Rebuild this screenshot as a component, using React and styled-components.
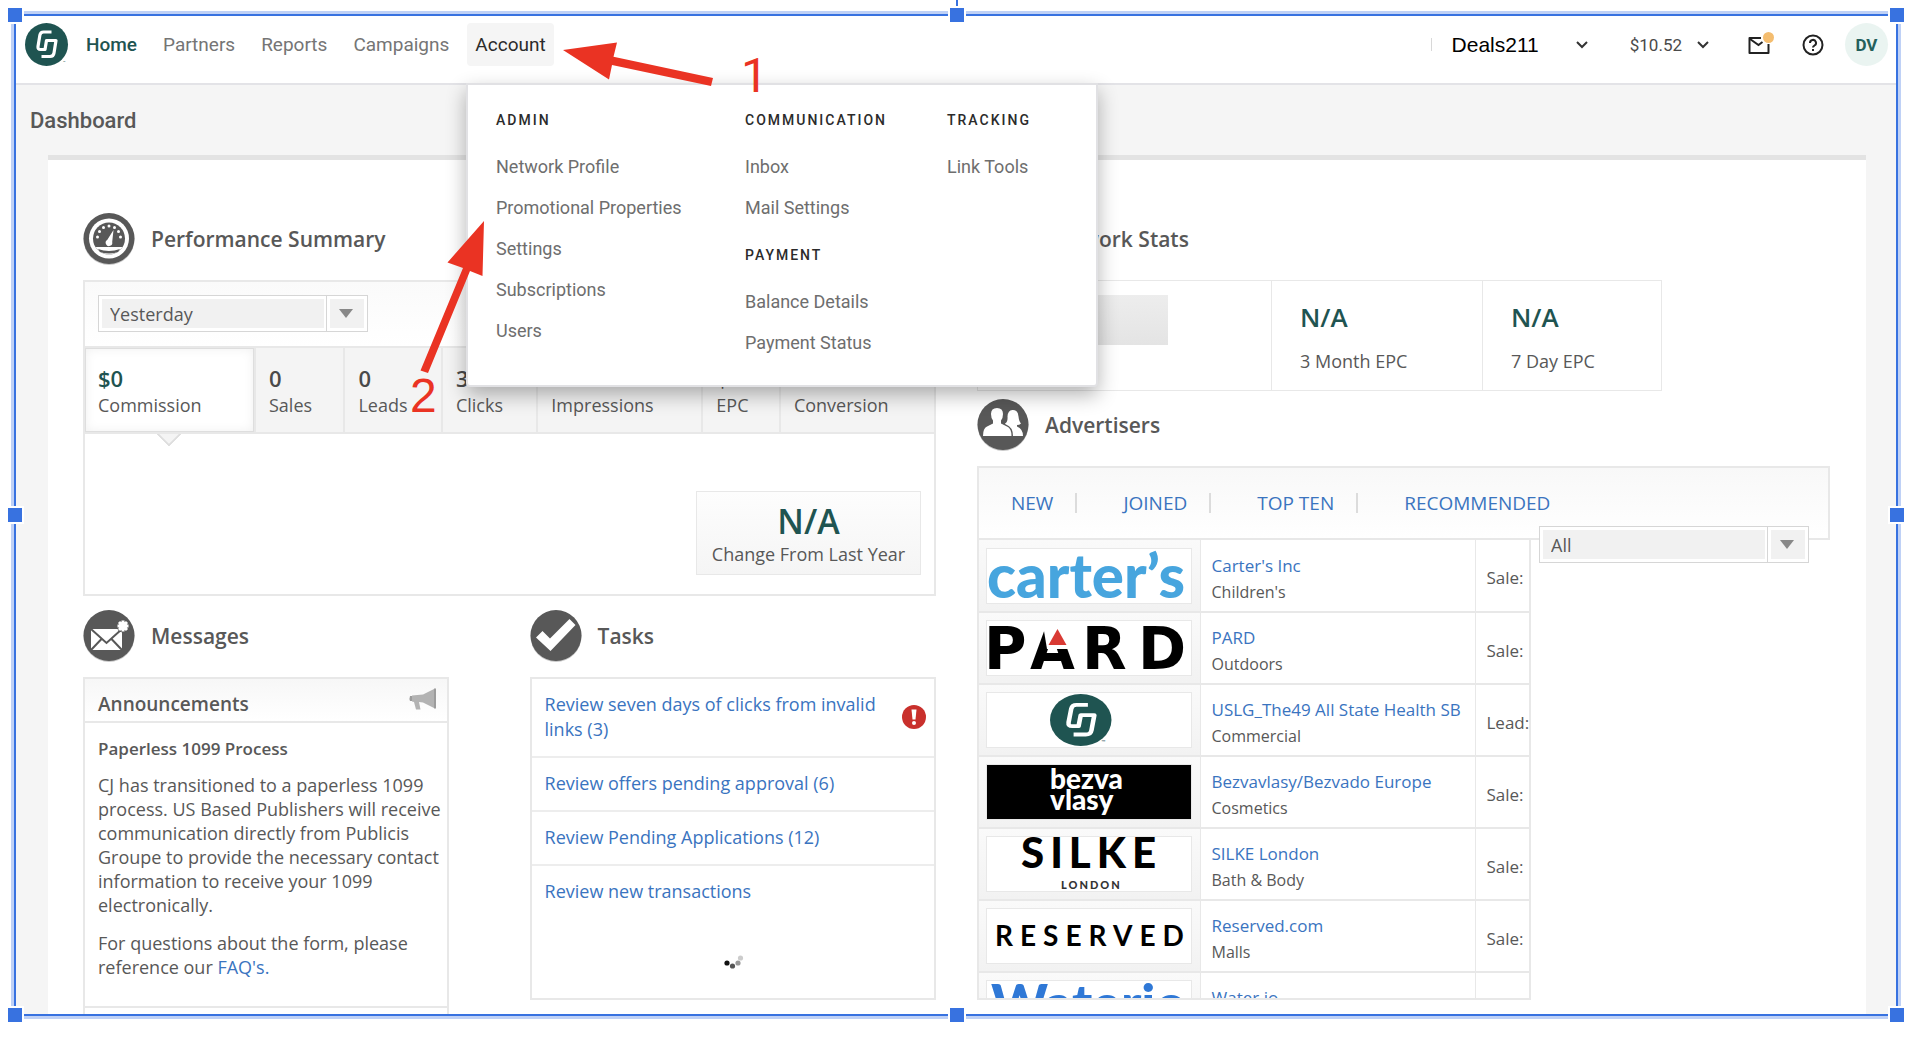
import React from "react";
import styled, { createGlobalStyle, css } from "styled-components";

const C = {
  text: "#585858",
  navText: "#757575",
  dark: "#2b2b2b",
  green: "#1f5451",
  link: "#3a74bf",
  line: "#e8e8e8",
  blue: "#3872e0",
  blueSoft: "#bfd1f6",
  red: "#ea3323",
};

const sans = '"Open Sans", "Noto Sans", sans-serif';
const ui = 'Roboto, "Liberation Sans", sans-serif';

const Global = createGlobalStyle`
  *, *::before, *::after { box-sizing: border-box; }
  html, body { margin: 0; height: 100%; background: #fff; }
  body { overflow: hidden; }
  h1, h2, h3, p, ul { margin: 0; padding: 0; }
  ul { list-style: none; }
  a { text-decoration: none; color: inherit; }
  svg { display: block; }
`;

/* ---------- selection frame ---------- */

const Canvas = styled.div`
  position: relative;
  height: 100vh;
  min-height: 600px;
  padding: 14px 12px 24px 14px;
  overflow: hidden;
`;

const Frame = styled.div`
  display: flex;
  flex-direction: column;
  height: 100%;
  border: 2px solid ${C.blue};
  box-shadow: 0 0 0 3px ${C.blueSoft};
  background: #f5f5f5;
  overflow: hidden;
`;

const Handle = styled.span`
  position: absolute;
  width: 18px;
  height: 18px;
  border: 2px solid #fff;
  background: ${C.blue};
  ${(p) => (p.$v === "top" ? "top: 6px;" : p.$v === "bottom" ? "bottom: 16px;" : "top: calc(50% - 14px);")}
  ${(p) => (p.$h === "left" ? "left: 6px;" : p.$h === "right" ? "right: 4px;" : "left: calc(50% - 7px);")}
`;

const Stem = styled.span`
  position: absolute;
  top: 0;
  left: calc(50% + 1px);
  width: 2px;
  height: 6px;
  background: ${C.blue};
`;

const Marks = styled.svg`
  position: absolute;
  z-index: 3;
  top: 0;
  left: 0;
  width: 760px;
  height: 420px;
  pointer-events: none;
`;

const Mark = styled.span`
  position: absolute;
  z-index: 3;
  left: ${(p) => p.$x}px;
  top: ${(p) => p.$y}px;
  font: 48px/48px ${(p) => p.$font};
  color: ${C.red};
`;

/* ---------- header ---------- */

const Header = styled.header`
  position: relative;
  display: flex;
  align-items: flex-start;
  justify-content: space-between;
  flex: none;
  height: 69px;
  padding: 7px 8px 0 9px;
  background: #fff;
  border-bottom: 2px solid #e3e3e7;
  font-family: ${ui};
`;

const Cluster = styled.div`
  display: flex;
  align-items: center;
  height: 43px;
`;

const Nav = styled.nav`
  display: flex;
  align-items: center;
  gap: 10px;
  margin-left: 9px;
`;

const NavLink = styled.a`
  display: flex;
  align-items: center;
  height: 43px;
  padding: 0 8px;
  border-radius: 4px;
  font-size: 19px;
  color: ${C.navText};
  ${(p) => p.$current && css`font-weight: 500; color: ${C.green};`}
  ${(p) => p.$open && css`background: #f5f5f5; color: ${C.dark};`}
`;

const Rule = styled.span`
  width: 1px;
  height: 13px;
  margin-right: 20px;
  background: #d8d8d8;
`;

const TopButton = styled.button`
  display: flex;
  align-items: center;
  padding: 0;
  border: 0;
  background: none;
  color: ${C.dark};
  font-family: ${ui};
  cursor: pointer;
`;

const CompanyButton = styled(TopButton)`
  gap: 37px;
  color: #000;
  font: 21px/26px "Liberation Sans", Arial, sans-serif;
`;

const BalanceButton = styled(TopButton)`
  gap: 15px;
  margin-left: 42px;
  font-size: 17px;
  color: #4a4a4a;
`;

const IconButton = styled(TopButton)`
  margin-left: ${(p) => p.$gap}px;
`;

const Avatar = styled(TopButton)`
  justify-content: center;
  width: 43px;
  height: 43px;
  margin-left: 21px;
  border-radius: 50%;
  background: #eaf4f1;
  color: #24605c;
  font-size: 17px;
  font-weight: 700;
`;

const Menu = styled.div`
  position: absolute;
  top: 67px;
  left: 450px;
  z-index: 2;
  display: grid;
  grid-template-columns: 249px 202px 148px;
  width: 632px;
  height: 304px;
  padding: 25px 0 0 28px;
  background: #fff;
  border: 2px solid #e1e1e4;
  border-radius: 0 0 4px 4px;
  box-shadow: 0 8px 20px rgba(0, 0, 0, 0.3);
`;

const MenuTitle = styled.h3`
  margin-bottom: 17px;
  font-size: 14px;
  line-height: 20px;
  font-weight: 500;
  letter-spacing: 2px;
  color: ${C.dark};
`;

const MenuLink = styled.a`
  display: block;
  height: 41px;
  padding-top: 9px;
  font-size: 18px;
  line-height: 22px;
  color: #6e6e6e;
`;

const MenuGroup = styled.div`
  margin-bottom: 16px;
`;

/* ---------- page ---------- */

const PageTitle = styled.h1`
  flex: none;
  padding: 21px 14px 0;
  height: 70px;
  font: 500 22px/30px ${ui};
  color: ${C.text};
`;

const Sheet = styled.main`
  flex: 1;
  min-height: 0;
  display: grid;
  grid-template-columns: minmax(0, 1fr) minmax(0, 1fr);
  column-gap: 41px;
  margin: 0 30px 0 32px;
  padding: 53px 36px 0 35px;
  border-top: 5px solid #e3e3e3;
  background: #fff;
  font-family: ${sans};
  color: ${C.text};
  overflow: hidden;
`;

const Column = styled.div`
  display: flex;
  flex-direction: column;
`;

const Heading = styled.div`
  display: flex;
  align-items: center;
  flex: none;
  gap: 16px;
  height: 52px;
  margin-bottom: 15px;
`;

const HeadingText = styled.h2`
  font-size: 21px;
  line-height: 30px;
  font-weight: 600;
`;

const Box = styled.section`
  flex: none;
  border: 2px solid ${C.line};
  background: #fff;
`;

const SelectWrap = styled.div`
  position: relative;
  width: 270px;
  height: 37px;
  &::after {
    content: "";
    position: absolute;
    right: 15px;
    top: 14px;
    border: 7px solid transparent;
    border-top: 9px solid #888;
    border-bottom: 0;
    pointer-events: none;
  }
`;

const Select = styled.select`
  appearance: none;
  width: 100%;
  height: 100%;
  padding: 0 50px 0 11px;
  border: 1px solid #d6d6d6;
  border-radius: 0;
  background:
    linear-gradient(#f1f1f1, #f1f1f1) 3px 3px / 222px calc(100% - 6px) no-repeat,
    linear-gradient(#d6d6d6, #d6d6d6) 227px 0 / 1px 100% no-repeat,
    linear-gradient(#f1f1f1, #f1f1f1) 231px 3px / 34px calc(100% - 6px) no-repeat,
    #fff;
  font: 18px/24px ${sans};
  color: ${C.text};
`;

const Filter = styled.div`
  padding: 13px;
  height: 64px;
  background: linear-gradient(#fafafa, #fff);
`;

const StatTabs = styled.div`
  display: grid;
  grid-template-columns: 172fr 90fr 98fr 96fr 166fr 78fr 154fr;
  height: 88px;
  border-top: 2px solid ${C.line};
  border-bottom: 2px solid ${C.line};
`;

const StatTab = styled.button`
  position: relative;
  display: flex;
  flex-direction: column;
  align-items: flex-start;
  padding: 16px 0 0 13px;
  border: 0;
  border-right: 2px solid ${C.line};
  background: #f4f4f4;
  font-family: ${sans};
  color: ${C.text};
  &:last-child { border-right: 0; }
  ${(p) => p.$active && css`
    background: #fff;
    box-shadow: inset 0 0 0 1px #dedede, inset 0 0 12px rgba(0, 0, 0, 0.07);
    &::after {
      content: "";
      position: absolute;
      left: calc(50% - 9px);
      bottom: -11px;
      width: 18px;
      height: 18px;
      border: solid #dedede;
      border-width: 0 2px 2px 0;
      background: #f4f4f4;
      clip-path: polygon(100% 0, 100% 100%, 0 100%);
      transform: rotate(45deg);
    }
  `}
`;

const StatValue = styled.strong`
  font-size: 22px;
  line-height: 28px;
  font-weight: 600;
  color: ${(p) => (p.$active ? C.green : "#4a4a4a")};
`;

const StatLabel = styled.span`
  font-size: 18px;
  line-height: 26px;
`;

const ChartArea = styled.div`
  display: flex;
  justify-content: flex-end;
  align-items: flex-end;
  height: 160px;
  padding: 0 13px 19px;
`;

const Change = styled.div`
  display: flex;
  flex-direction: column;
  align-items: center;
  width: 225px;
  height: 84px;
  padding-top: 8px;
  border: 1px solid ${C.line};
  background: linear-gradient(#fdfdfd, #f5f5f5);
  font-size: 18px;
  line-height: 24px;
`;

const ChangeValue = styled.strong`
  font-size: 34px;
  line-height: 42px;
  font-weight: 600;
  color: ${C.green};
`;

const LowerRow = styled.div`
  display: grid;
  grid-template-columns: 366fr 407fr;
  column-gap: 81px;
  padding-top: 14px;
`;

const BoxHead = styled.div`
  display: flex;
  justify-content: space-between;
  height: 44px;
  padding: 8px 10px 0 13px;
  border-bottom: 2px solid ${C.line};
  background: linear-gradient(#f7f7f7, #fff);
`;

const BoxTitle = styled.h3`
  padding-top: 3px;
  font-size: 19px;
  line-height: 28px;
  font-weight: 600;
`;

const Notice = styled.div`
  height: 285px;
  padding: 14px 0 0 13px;
  border-bottom: 2px solid ${C.line};
  font-size: 18px;
  line-height: 24px;
`;

const NoticeTitle = styled.h3`
  margin-bottom: 12px;
  font-size: 17px;
  font-weight: 600;
`;

const Para = styled.p`
  margin-bottom: 14px;
`;

const Link = styled.a`
  color: ${C.link};
`;

const Task = styled.li`
  display: flex;
  align-items: center;
  justify-content: space-between;
  padding: 13px 8px 14px 13px;
  border-bottom: ${(p) => (p.$last ? 0 : 2)}px solid #ededed;
  color: ${C.link};
`;

const TaskText = styled.a`
  max-width: 340px;
  font-size: 18px;
  line-height: 25px;
`;

const Loading = styled.div`
  display: flex;
  justify-content: center;
  height: 80px;
  padding-top: 35px;
`;

const Stats = styled(Box)`
  display: grid;
  grid-template-columns: 293px 211px 179px;
  width: 685px;
  height: 111px;
  margin-bottom: 8px;
  border-width: 1px;
`;

const Stat = styled.div`
  padding: 20px 0 0 28px;
  border-left: 1px solid ${C.line};
  font-size: 18px;
  line-height: 24px;
`;

const StatBig = styled.strong`
  display: block;
  margin-bottom: 16px;
  font-size: 26px;
  line-height: 32px;
  font-weight: 600;
  color: ${C.green};
`;

const Meter = styled.div`
  width: 176px;
  height: 50px;
  margin: 14px;
  background: linear-gradient(#ededed, #e4e4e4);
`;

const AdTabs = styled.nav`
  display: flex;
  align-items: center;
  flex: none;
  height: 74px;
  padding-left: 32px;
  border: 2px solid ${C.line};
  background: linear-gradient(#f8f8f8, #fff);
`;

const AdTab = styled.a`
  display: flex;
  align-items: center;
  font-size: 19px;
  line-height: 26px;
  color: ${C.link};
  & + &::before {
    content: "";
    width: 2px;
    height: 20px;
    margin: 0 46px 0 22px;
    background: #dcdcdc;
  }
`;

const AdRow = styled.div`
  display: flex;
  align-items: flex-start;
  gap: 8px;
`;

const AdFilter = styled.div`
  margin-top: -14px;
`;

const AdScroll = styled.div`
  width: 554px;
  height: 460px;
  border: 2px solid ${C.line};
  border-top: 0;
  overflow: hidden;
`;

const AdTable = styled.table`
  width: 100%;
  table-layout: fixed;
  border-collapse: collapse;
`;

const LogoCell = styled.td`
  width: 221px;
  height: 72px;
  padding: 0 7px;
  border-right: 1px solid ${C.line};
  border-bottom: 2px solid ${C.line};
  background: linear-gradient(#fafafa, #f2f2f2);
`;

const NameCell = styled.td`
  width: 275px;
  padding: 6px 0 0 11px;
  border-right: 1px solid ${C.line};
  border-bottom: 2px solid ${C.line};
  white-space: nowrap;
  font-size: 17px;
  line-height: 26px;
`;

const Category = styled.div`
  font-size: 16px;
`;

const TermCell = styled.td`
  padding: 4px 0 0 11px;
  border-bottom: 2px solid ${C.line};
  font-size: 17px;
  overflow: hidden;
`;

const LogoArt = styled.svg`
  width: 206px;
  height: 56px;
  border: 1px solid ${C.line};
  background: ${(p) => p.$bg || "#fff"};
  overflow: hidden;
`;

/* ---------- drawings ---------- */

const CJMark = () => (
  <g fill="none" stroke="#fff" strokeWidth="3.2" strokeLinejoin="round">
    <path d="M26.500 9H18.500Q15.500 9 14.900 12L13 23.500Q12.600 26.500 15.500 26.500H20L21.500 17.500H31L29 30Q28.500 33.500 25 33.500H16.500" />
  </g>
);

const CJLogo = () => (
  <svg width="44" height="43" viewBox="0 0 44 43" role="img" aria-label="CJ">
    <ellipse cx="21.5" cy="21.500" rx="21.500" ry="21.500" fill={C.green} />
    <CJMark />
    <text x="38" y="41" fontSize="4" fontFamily="Roboto" fill={C.green}>™</text>
  </svg>
);

const Chevron = () => (
  <svg width="12" height="8" viewBox="0 0 12 8" fill="none" stroke="#333" strokeWidth="2" aria-hidden="true">
    <path d="M1 1l5 5 5-5" />
  </svg>
);

const MailIcon = () => (
  <svg width="28" height="26" viewBox="0 0 28 26" fill="none" aria-hidden="true">
    <path d="M14 6H2.500V21h19V12" stroke="#222" strokeWidth="2" strokeLinejoin="round" />
    <path d="M3 7l8.500 6 4-3" stroke="#222" strokeWidth="2" />
    <circle cx="21.500" cy="5.500" r="5.500" fill="#f4bd6f" />
  </svg>
);

const HelpIcon = () => (
  <svg width="22" height="22" viewBox="0 0 22 22" fill="none" stroke="#222" strokeWidth="2" aria-hidden="true">
    <circle cx="11" cy="11" r="9.500" />
    <path d="M8 9a3 3 0 1 1 4.500 2.500Q11 12.500 11 13.500" />
    <path d="M11 15v2" />
  </svg>
);

const Badge = ({ children }) => (
  <svg width="52" height="54" viewBox="0 0 52 54" aria-hidden="true">
    <circle cx="26" cy="27.500" r="25.500" fill="#c9c9c9" />
    <circle cx="26" cy="26.500" r="25.500" fill={C.text} />
    {children}
  </svg>
);

const GaugeArt = () => (
  <Badge>
    <circle cx="26" cy="26.500" r="20" fill="#fff" />
    <circle cx="26" cy="26.500" r="16" fill={C.text} />
    <path d="M12.500 35h27A16 16 0 0 1 12.500 35z" fill="#fff" />
    <path d="M15 37q11 4 22 0l-2 3q-9 3-18 0z" fill={C.text} />
    <path d="M30.500 18l-1.300 12a3.300 3.300 0 1 1-5-2z" fill="#fff" />
    <g fill="#fff">
      {[[14.500, 25], [16.500, 19.500], [20.500, 15.500], [26, 14], [31.500, 15.500], [35.500, 19.500], [37.500, 25]].map(([x, y]) => (
        <circle key={x} cx={x} cy={y} r="1.500" />
      ))}
    </g>
  </Badge>
);

const LetterArt = () => (
  <Badge>
    <rect x="8" y="20" width="31" height="21" fill="#fff" />
    <path d="M8 20l15.500 14L39 20M8 41l10.500-11M39 41L28.500 30" fill="none" stroke={C.text} strokeWidth="2" />
    <circle cx="40" cy="17" r="6.500" fill={C.text} />
    <path d="M40 11.500v11M34.500 17h11M36 13l8 8M44 13l-8 8" stroke="#fff" strokeWidth="3" />
    <circle cx="40" cy="17" r="4" fill="#fff" />
  </Badge>
);

const CheckArt = () => (
  <Badge>
    <path d="M6 28.500L12.500 22 20 29.500 39.500 10 45.500 16 20.500 42z" fill="#fff" />
  </Badge>
);

const PeopleArt = () => (
  <Badge>
    <path d="M6 38q0-8 4-9.500l6-3v-3q-2-2.500-2-6.500 0-6 6-6t6 6q0 4-2 6.500v3l6 3q4.500 2 4.500 9.500z" fill="#fff" />
    <path d="M36 38q0-9-7-11.500-1-.5-1-1 3-1.500 2.500-7Q31 11.500 36 12q5 0 5.500 6.500.5 5 2.500 7-1.500 1.500-4 1.500v1.500q6 2.500 6 9.500z" fill="#fff" />
  </Badge>
);

const Megaphone = () => (
  <svg width="28" height="24" viewBox="0 0 28 24" aria-hidden="true">
    <path d="M3 8.500L14 7.500 25 2v19L14 15.500l-4-.5 1.500 7.500H7L5 15 3 14.500z" fill="#b3b3b3" />
    <path d="M1 9h2v5H1Q0 11.500 1 9z" fill="#9c9c9c" />
    <path d="M25 1.500h2v20h-2z" fill="#9c9c9c" />
  </svg>
);

const Alert = () => (
  <svg width="24" height="24" viewBox="0 0 24 24" role="img" aria-label="Urgent">
    <circle cx="12" cy="12" r="12" fill="#c9302c" />
    <path d="M9.500 4.500h5l-1 10h-3z" fill="#fff" />
    <circle cx="12" cy="18" r="2" fill="#fff" />
  </svg>
);

const Spinner = () => (
  <svg width="22" height="18" viewBox="0 0 22 18" role="img" aria-label="Loading">
    <circle cx="5" cy="10" r="2.600" fill="#111" />
    <circle cx="10.500" cy="13" r="2.600" fill="#555" />
    <circle cx="16" cy="10" r="2.600" fill="#999" />
    <circle cx="18.500" cy="5" r="2.600" fill="#ccc" />
  </svg>
);

const logos = {
  carters: (
    <LogoArt viewBox="0 0 204 54" role="img" aria-label="carter's">
      <text x="0" y="49" fontFamily="Lato" fontWeight="900" fontSize="60" fill="#47a5de">carter’s</text>
    </LogoArt>
  ),
  pard: (
    <LogoArt viewBox="0 0 204 54" role="img" aria-label="PARD">
      <text x="-3 43 95 151" y="48" fontFamily="DejaVu Sans" fontWeight="700" fontSize="58" fill="#000">PARD</text>
      <path d="M56 4h30l-3 24H60z" fill="#fff" />
      <path d="M70.500 8l9 16h-18z" fill="#d93a34" />
    </LogoArt>
  ),
  cj: (
    <LogoArt viewBox="0 0 204 54" role="img" aria-label="CJ">
      <g transform="translate(63 1) scale(1.430 1.210)">
        <circle cx="21.500" cy="21.500" r="21.500" fill={C.green} />
        <CJMark />
        <text x="36" y="41" fontSize="5" fontFamily="Roboto" fill={C.green}>™</text>
      </g>
    </LogoArt>
  ),
  bezva: (
    <LogoArt viewBox="0 0 204 54" $bg="#000" role="img" aria-label="bezva vlasy">
      <text fontFamily="Lato" fontWeight="900" fontSize="28" fill="#fff">
        <tspan x="63" y="24">bezva</tspan>
        <tspan x="63" y="45">vlasy</tspan>
      </text>
    </LogoArt>
  ),
  silke: (
    <LogoArt viewBox="0 0 204 54" role="img" aria-label="SILKE London">
      <text x="34" y="31" fontFamily="Lato" fontWeight="900" fontSize="42" letterSpacing="6" fill="#000">SILKE</text>
      <text x="74" y="52" fontFamily="Lato" fontWeight="900" fontSize="11" letterSpacing="2" fill="#333">LONDON</text>
    </LogoArt>
  ),
  reserved: (
    <LogoArt viewBox="0 0 204 54" role="img" aria-label="RESERVED">
      <text x="8" y="37" fontFamily="Lato" fontWeight="700" fontSize="28" letterSpacing="7" fill="#000">RESERVED</text>
    </LogoArt>
  ),
  water: (
    <LogoArt viewBox="0 0 204 54" role="img" aria-label="Waterio">
      <text x="4" y="42" fontFamily="Lato" fontWeight="900" fontSize="54" fill="#2f78d6">Waterio</text>
    </LogoArt>
  ),
};

/* ---------- data ---------- */

const stats = [
  ["$0", "Commission"],
  ["0", "Sales"],
  ["0", "Leads"],
  ["3", "Clicks"],
  ["0", "Impressions"],
  ["$0", "EPC"],
  ["0%", "Conversion"],
];

const tasks = [
  { label: "Review seven days of clicks from invalid links (3)", urgent: true },
  { label: "Review offers pending approval (6)" },
  { label: "Review Pending Applications (12)" },
  { label: "Review new transactions" },
];

const advertisers = [
  ["carters", "Carter's Inc", "Children's", "Sale:"],
  ["pard", "PARD", "Outdoors", "Sale:"],
  ["cj", "USLG_The49 All State Health SB", "Commercial", "Lead:"],
  ["bezva", "Bezvavlasy/Bezvado Europe", "Cosmetics", "Sale:"],
  ["silke", "SILKE London", "Bath & Body", "Sale:"],
  ["reserved", "Reserved.com", "Malls", "Sale:"],
  ["water", "Water.io", "", ""],
];

const menu = [
  [["ADMIN", ["Network Profile", "Promotional Properties", "Settings", "Subscriptions", "Users"]]],
  [
    ["COMMUNICATION", ["Inbox", "Mail Settings"]],
    ["PAYMENT", ["Balance Details", "Payment Status"]],
  ],
  [["TRACKING", ["Link Tools"]]],
];

const Picker = ({ name, value }) => (
  <SelectWrap>
    <Select aria-label={name} defaultValue={value}>
      <option>{value}</option>
    </Select>
  </SelectWrap>
);

const SectionHeading = ({ icon, children }) => (
  <Heading>
    {icon}
    <HeadingText>{children}</HeadingText>
  </Heading>
);

const AccountMenu = () => (
  <Menu>
    {menu.map((groups, i) => (
      <div key={i}>
        {groups.map(([title, items]) => (
          <MenuGroup key={title}>
            <MenuTitle>{title}</MenuTitle>
            {items.map((item) => (
              <MenuLink href="#" key={item}>{item}</MenuLink>
            ))}
          </MenuGroup>
        ))}
      </div>
    ))}
  </Menu>
);

export default function App() {
  return (
    <Canvas>
      <Global />
      <Frame>
        <Header>
          <Cluster>
            <CJLogo />
            <Nav>
              <NavLink href="#" $current>Home</NavLink>
              <NavLink href="#">Partners</NavLink>
              <NavLink href="#">Reports</NavLink>
              <NavLink href="#">Campaigns</NavLink>
              <NavLink href="#" $open>Account</NavLink>
            </Nav>
          </Cluster>
          <Cluster>
            <Rule />
            <CompanyButton>Deals211<Chevron /></CompanyButton>
            <BalanceButton>$10.52<Chevron /></BalanceButton>
            <IconButton $gap={38} aria-label="Inbox"><MailIcon /></IconButton>
            <IconButton $gap={27} aria-label="Help"><HelpIcon /></IconButton>
            <Avatar>DV</Avatar>
          </Cluster>
          <AccountMenu />
        </Header>
        <PageTitle>Dashboard</PageTitle>
        <Sheet>
          <Column>
            <SectionHeading icon={<GaugeArt />}>Performance Summary</SectionHeading>
            <Box>
              <Filter><Picker name="Date range" value="Yesterday" /></Filter>
              <StatTabs>
                {stats.map(([value, label], i) => (
                  <StatTab key={label} $active={i === 0}>
                    <StatValue $active={i === 0}>{value}</StatValue>
                    <StatLabel>{label}</StatLabel>
                  </StatTab>
                ))}
              </StatTabs>
              <ChartArea>
                <Change>
                  <ChangeValue>N/A</ChangeValue>
                  Change From Last Year
                </Change>
              </ChartArea>
            </Box>
            <LowerRow>
              <div>
                <SectionHeading icon={<LetterArt />}>Messages</SectionHeading>
                <Box>
                  <BoxHead>
                    <BoxTitle>Announcements</BoxTitle>
                    <Megaphone />
                  </BoxHead>
                  <Notice>
                    <NoticeTitle>Paperless 1099 Process</NoticeTitle>
                    <Para>
                      CJ has transitioned to a paperless 1099 process. US Based Publishers will receive
                      communication directly from Publicis Groupe to provide the necessary contact
                      information to receive your 1099 electronically.
                    </Para>
                    <Para>
                      For questions about the form, please reference our <Link href="#">FAQ's.</Link>
                    </Para>
                  </Notice>
                  <Notice />
                </Box>
              </div>
              <div>
                <SectionHeading icon={<CheckArt />}>Tasks</SectionHeading>
                <Box>
                  <ul>
                    {tasks.map(({ label, urgent }, i) => (
                      <Task key={label} $last={i === tasks.length - 1}>
                        <TaskText href="#">{label}</TaskText>
                        {urgent && <Alert />}
                      </Task>
                    ))}
                  </ul>
                  <Loading><Spinner /></Loading>
                </Box>
              </div>
            </LowerRow>
          </Column>
          <Column>
            <SectionHeading icon={<PeopleArt />}>Network Stats</SectionHeading>
            <Stats>
              <Meter />
              <Stat><StatBig>N/A</StatBig>3 Month EPC</Stat>
              <Stat><StatBig>N/A</StatBig>7 Day EPC</Stat>
            </Stats>
            <SectionHeading icon={<PeopleArt />}>Advertisers</SectionHeading>
            <AdTabs>
              <AdTab href="#">NEW</AdTab>
              <AdTab href="#">JOINED</AdTab>
              <AdTab href="#">TOP TEN</AdTab>
              <AdTab href="#">RECOMMENDED</AdTab>
            </AdTabs>
            <AdRow>
              <AdScroll>
                <AdTable>
                  <tbody>
                    {advertisers.map(([logo, name, category, term]) => (
                      <tr key={name}>
                        <LogoCell>{logos[logo]}</LogoCell>
                        <NameCell>
                          <Link href="#">{name}</Link>
                          <Category>{category || "\u00a0"}</Category>
                        </NameCell>
                        <TermCell>{term}</TermCell>
                      </tr>
                    ))}
                  </tbody>
                </AdTable>
              </AdScroll>
              <AdFilter><Picker name="Category" value="All" /></AdFilter>
            </AdRow>
          </Column>
        </Sheet>
      </Frame>
      <Stem />
      {["top", "middle", "bottom"].map((v) =>
        ["left", "center", "right"].map((h) =>
          v === "middle" && h === "center" ? null : <Handle key={v + h} $v={v} $h={h} />
        )
      )}
      <Marks viewBox="0 0 760 420" aria-hidden="true" fill={C.red}>
        <path d="M563 50L617 42.500 613.500 56.700 713 78 711 86 612 65 609 79.500z" />
        <path d="M484 221L482.500 276 470 271 428 373 420.500 370.500 463 268 447.500 262.500z" />
      </Marks>
      <Mark $x={741} $y={52} $font="Roboto, sans-serif">1</Mark>
      <Mark $x={410} $y={372} $font='"Liberation Sans", Arial, sans-serif'>2</Mark>
    </Canvas>
  );
}
